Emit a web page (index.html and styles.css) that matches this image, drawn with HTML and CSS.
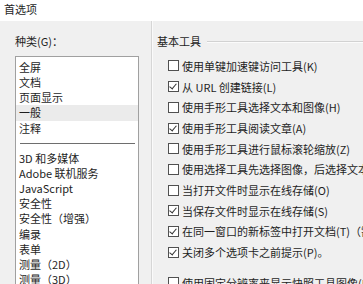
FILE: index.html
```html
<!DOCTYPE html>
<html lang="zh-CN">
<head>
    <meta charset="UTF-8">
    <title>首选项</title>
    <link rel="stylesheet" href="styles.css">
</head>
<body>
    <div class="titlebar">首选项</div>
    <div class="main">
        <div class="side">
            <div class="side-label">种类(G)：</div>
            <ul class="cat-list">
                <li>全屏</li>
                <li>文档</li>
                <li>页面显示</li>
                <li class="active">一般</li>
                <li>注释</li>
                <li class="sep"></li>
                <li>3D 和多媒体</li>
                <li>Adobe 联机服务</li>
                <li>JavaScript</li>
                <li>安全性</li>
                <li>安全性（增强）</li>
                <li>编录</li>
                <li>表单</li>
                <li>测量（2D）</li>
                <li>测量（3D）</li>
            </ul>
        </div>
        <div class="pane">
            <div class="group-head">
                <span>基本工具</span>
                <i class="rule"></i>
            </div>
            <ul class="opts">
                <li><span class="box"></span>使用单键加速键访问工具(K)</li>
                <li><span class="box checked"></span>从 URL 创建链接(L)</li>
                <li><span class="box"></span>使用手形工具选择文本和图像(H)</li>
                <li><span class="box checked"></span>使用手形工具阅读文章(A)</li>
                <li><span class="box"></span>使用手形工具进行鼠标滚轮缩放(Z)</li>
                <li><span class="box"></span>使用选择工具先选择图像，后选择文本</li>
                <li><span class="box"></span>当打开文件时显示在线存储(O)</li>
                <li><span class="box checked"></span>当保存文件时显示在线存储(S)</li>
                <li><span class="box checked"></span>在同一窗口的新标签中打开文档(T)（需要重新启动）</li>
                <li><span class="box checked"></span>关闭多个选项卡之前提示(P)。</li>
                <li class="gap"><span class="box"></span>使用固定分辨率来显示快照工具图像(N)</li>
            </ul>
        </div>
    </div>
</body>
</html>
```

FILE: styles.css
```css
body {
    margin: 0;
    width: 363px;
    height: 284px;
    overflow: hidden;
    font-family: "Noto Sans CJK SC", "Liberation Sans", sans-serif;
    font-size: 11px;
    color: #1e1e1e;
    background: #f0f0f0;
}
ul {
    list-style: none;
    margin: 0;
    padding: 0;
}
.titlebar {
    height: 21px;
    line-height: 18px;
    padding-left: 4px;
    background: #fff;
}
.main {
    display: flex;
    height: 263px;
    background: #f0f0f0;
}
.side {
    width: 151px;
    flex: none;
    box-sizing: border-box;
    padding: 13px 12px 0 15px;
}
.side-label {
    line-height: 15px;
}
.cat-list {
    margin-top: 7px;
    background: #fff;
    border: 1px solid #a0a0a0;
    padding: 3px 0;
    height: 260px;
}
.cat-list li {
    line-height: 15.15px;
    height: 15.15px;
    padding-left: 3px;
    white-space: nowrap;
}
.cat-list li.active {
    background: #ebebeb;
}
.cat-list li.sep {
    box-sizing: border-box;
    padding: 7px 3px 0 4px;
}
.cat-list li.sep::before {
    content: "";
    display: block;
    border-top: 1px solid #6e6e6e;
}
.pane {
    flex: 1;
    min-width: 0;
    border-left: 1px solid #d6d6d6;
    box-shadow: inset 1px 0 0 #fafafa;
    padding-top: 13px;
    white-space: nowrap;
}
.group-head {
    display: flex;
    align-items: center;
    line-height: 15px;
    padding-left: 5px;
}
.group-head .rule {
    flex: 1;
    margin-left: 6px;
    border-top: 1px solid #d2d2d2;
    border-bottom: 1px solid #fbfbfb;
}
.opts {
    margin-top: 6.6px;
    padding-left: 16px;
}
.opts li {
    display: flex;
    align-items: center;
    height: 20.7px;
}
.opts li.gap {
    margin-top: 10px;
}
.box {
    width: 9px;
    height: 9px;
    flex: none;
    margin-right: 3px;
    border: 1px solid #505050;
    background: #fff;
    position: relative;
}
.box.checked::after {
    content: "";
    position: absolute;
    left: 2px;
    top: 0;
    width: 3px;
    height: 6px;
    border-right: 1.2px solid #333;
    border-bottom: 1.2px solid #333;
    transform: rotate(40deg);
}
```
